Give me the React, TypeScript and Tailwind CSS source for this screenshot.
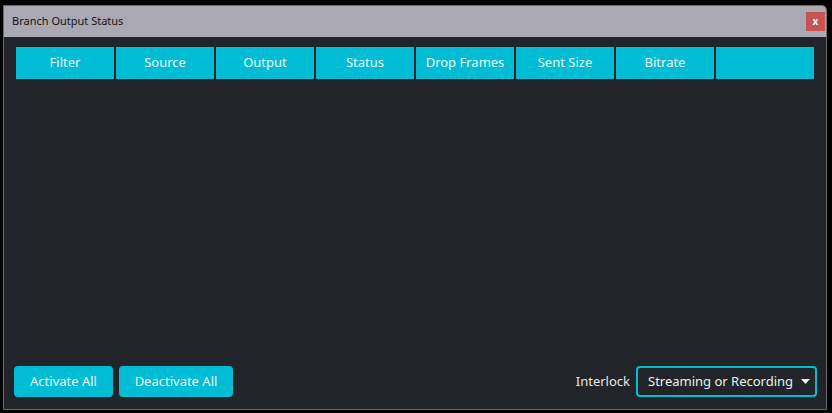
import React from "react";

const columns = ["Filter", "Source", "Output", "Status", "Drop Frames", "Sent Size", "Bitrate", ""];

const App: React.FC = () => {
  return (
    <div
      className="w-[832px] h-[413px] bg-black pt-[5px] pl-[3px]"
      style={{ fontFamily: '"Noto Sans", "Open Sans", sans-serif' }}
    >
      <div className="w-[824px] h-[405px] flex flex-col border border-[#6b6b70] rounded-tr-[5px] overflow-hidden bg-[#212428]">
        {/* title bar */}
        <div className="h-[31px] shrink-0 bg-[#a9a8b3] flex items-center justify-between pl-[8px] pr-[1px]">
          <span className="text-[11px] text-[#151515]">Branch Output Status</span>
          <button className="w-[19px] h-[19px] bg-[#c85353] text-white text-[10px] font-bold leading-none flex items-center justify-center pb-[1px]">
            x
          </button>
        </div>

        {/* table */}
        <div className="flex-1 pt-[10px] px-[12px]">
          <div className="flex gap-[2px]">
            {columns.map((c, i) => (
              <div
                key={i}
                className="w-[98px] h-[32px] bg-[#00bcd4] text-[#eaf8fb] text-[13px] flex items-center justify-center"
              >
                {c}
              </div>
            ))}
          </div>
        </div>

        {/* footer */}
        <div className="flex items-center justify-between pl-[10px] pr-[9px] pb-[12px]">
          <div className="flex gap-[6px]">
            <button className="w-[99px] h-[31px] rounded-[4px] bg-[#00bcd4] text-[#eaf8fb] text-[13px]">
              Activate All
            </button>
            <button className="w-[114px] h-[31px] rounded-[4px] bg-[#00bcd4] text-[#eaf8fb] text-[13px]">
              Deactivate All
            </button>
          </div>
          <div className="flex items-center gap-[6px]">
            <span className="text-[13px] text-[#e6e6e6]">Interlock</span>
            <div className="w-[181px] h-[31px] rounded-[4px] border-2 border-[#00bcd4] flex items-center justify-between pl-[10px] pr-[5px]">
              <span className="text-[13px] text-[#f0f0f0]">Streaming or Recording</span>
              <svg width="9" height="5" viewBox="0 0 9 5">
                <path d="M0 0 L9 0 L4.5 5 Z" fill="#f0f0f0" />
              </svg>
            </div>
          </div>
        </div>
      </div>
    </div>
  );
};

export default App;
